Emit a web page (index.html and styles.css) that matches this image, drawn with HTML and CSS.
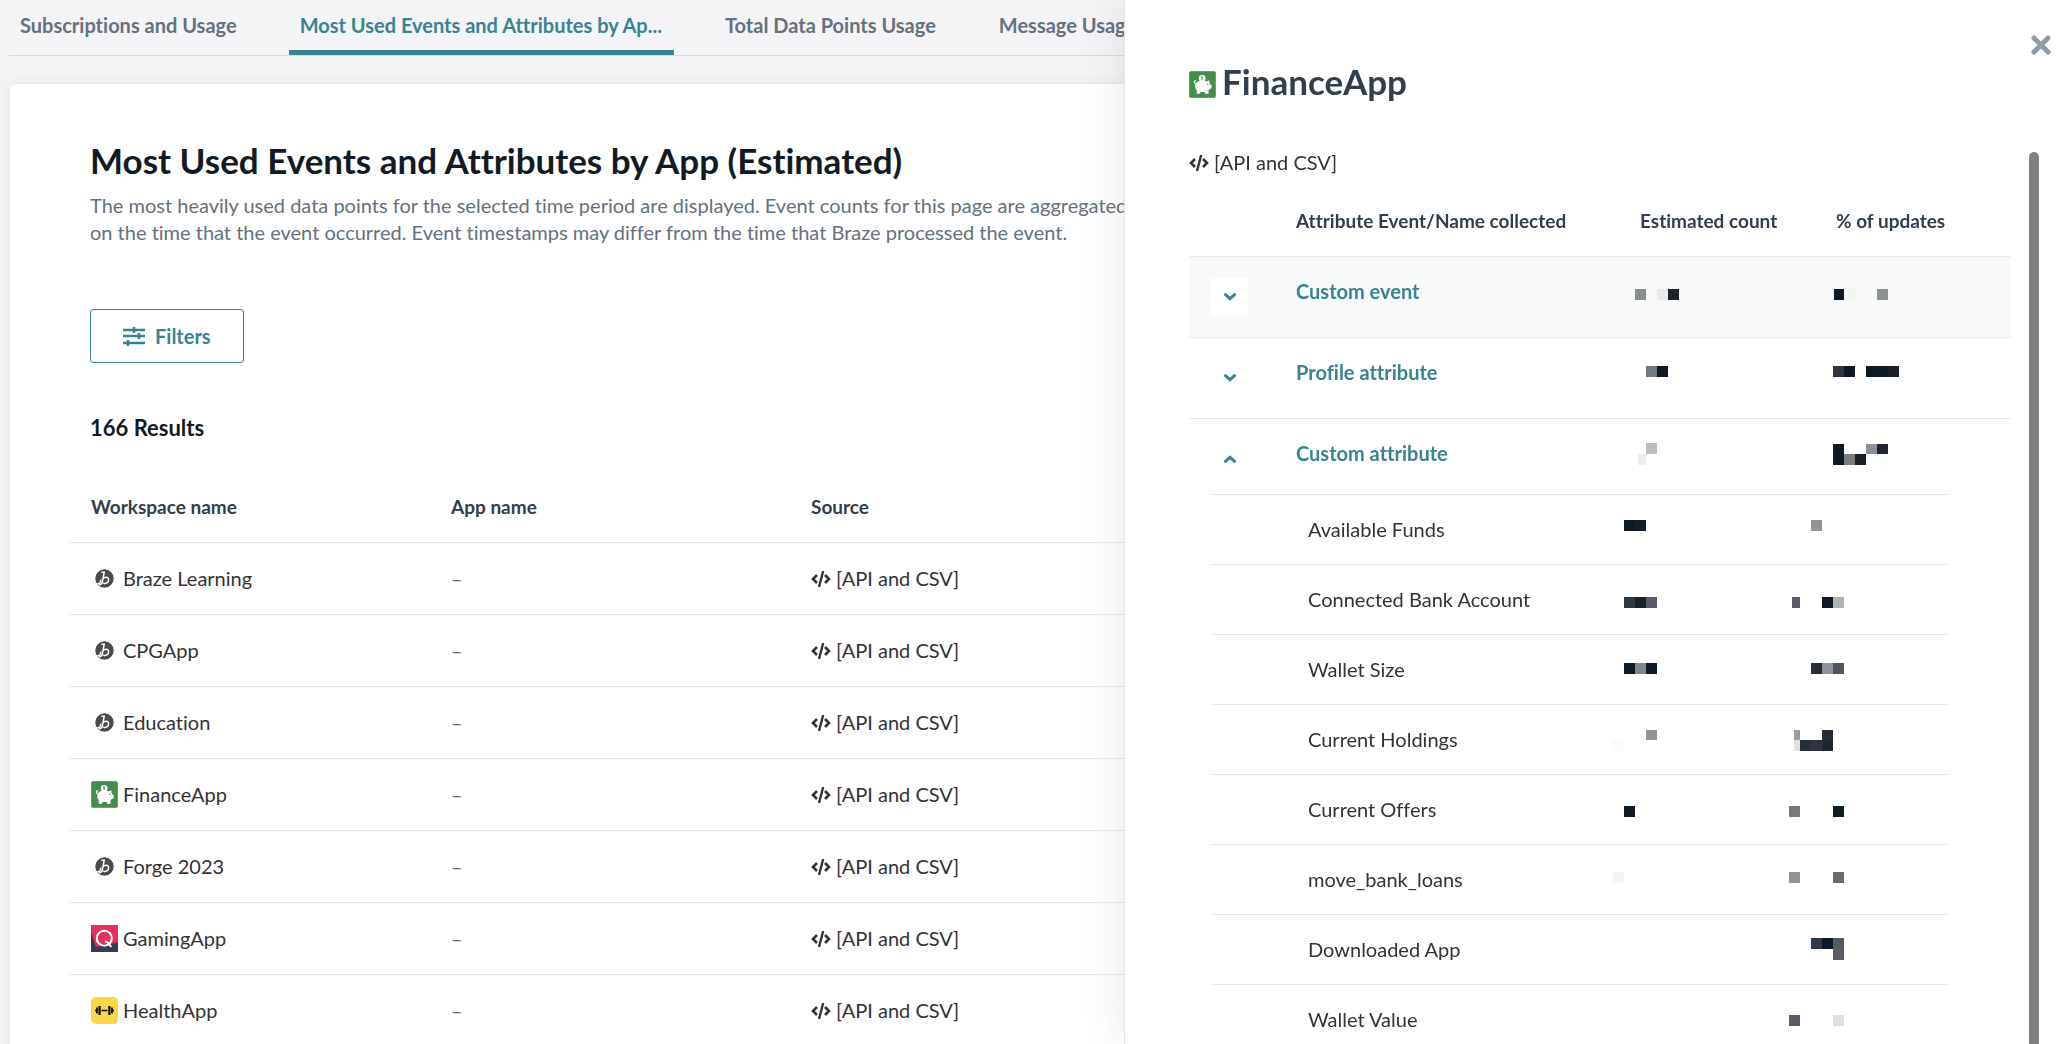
FILE: index.html
```html
<!DOCTYPE html>
<html lang="en">
<head>
<meta charset="utf-8">
<title>Most Used Events and Attributes by App</title>
<link rel="stylesheet" href="styles.css">
</head>
<body>
<svg class="sprite" aria-hidden="true">
  <symbol id="code" viewBox="0 0 20 16">
    <path d="M6 4 2 8l4 4M14 4l4 4-4 4" fill="none" stroke="currentColor" stroke-width="2.6"/>
    <path d="M12 .8 8.2 15.2" fill="none" stroke="currentColor" stroke-width="2.4" stroke-linecap="round"/>
  </symbol>
  <symbol id="braze" viewBox="0 0 27 27">
    <circle cx="13.500" cy="13.500" r="9.200" fill="#4b4b4d"/>
    <path d="M4.500 18.800c3 .8 5-1 5.400-3.800M10.800 7.200h2.400l-1.600 8.600c-.3 2-1.200 3.400-3 3.800M12 14c1.200-2.200 5.600-2.600 5.600.8 0 2.800-2.600 4.400-5 3.400" fill="none" stroke="#fff" stroke-width="1.500" stroke-linecap="round"/>
  </symbol>
  <symbol id="finance" viewBox="0 0 27 27">
    <rect x=".5" y=".5" width="26" height="26" rx="1.500" fill="#448d4c" stroke="#77a244"/>
    <circle cx="13.200" cy="7.300" r="3.400" fill="#fff"/>
    <path d="M13.200 5.200v4.200M12.200 6.200l1-.9" stroke="#448d4c" stroke-width="1" fill="none"/>
    <path d="M7.500 11.500c1.800-1.500 3.700-1.900 6-1.900 1.500 0 2.900.3 4 .9l2.800-1.300.3 3.300 1 1.300h1v3.500l-1.900.6-1.200 1.600v3.200h-3.600v-1.800h-4.700v1.800H7.700v-3.600c-1.300-1.200-1.700-2.600-1.500-4.500z" fill="#fff"/>
    <path d="M7.500 13c-2.600 0-2.800-3.600-.8-3.100" fill="none" stroke="#fff" stroke-width="1.300" stroke-linecap="round"/>
    <circle cx="18.800" cy="13.400" r=".7" fill="#448d4c"/>
  </symbol>
  <symbol id="gaming" viewBox="0 0 27 27">
    <path d="M0 0h27v27H0z" fill="#e5305b"/>
    <path d="M0 7.500 5 22l22-4.500V27H0z" fill="#353c50"/>
    <circle cx="13.300" cy="13.200" r="7.500" fill="none" stroke="#fff" stroke-width="2"/>
    <path d="m14 16.200 3.200 1.500 3 4.300" fill="none" stroke="#fff" stroke-width="2"/>
  </symbol>
  <symbol id="health" viewBox="0 0 27 27">
    <rect width="27" height="27" rx="5" fill="#f9d749"/>
    <path d="M4 13.500h2M10.500 13.500h6M21 13.500h2" stroke="#111" stroke-width="1.400"/>
    <path d="M6 10.500v6M21 10.500v6" stroke="#111" stroke-width="1.800"/>
    <path d="M8.600 9v9M18.400 9v9" stroke="#111" stroke-width="2.200"/>
  </symbol>
  <symbol id="chevron" viewBox="0 0 12 8">
    <path d="m1.500 1.700 4.500 4 4.500-4" fill="none" stroke="currentColor" stroke-width="3" stroke-linecap="round"/>
  </symbol>
</svg>

<main class="page">
  <nav class="tabs" aria-label="Usage reports">
    <a class="tab" href="#subscriptions">Subscriptions and Usage</a>
    <a class="tab tab-active" href="#events" aria-current="page">Most Used Events and Attributes by Ap...</a>
    <a class="tab" href="#data-points">Total Data Points Usage</a>
    <a class="tab" href="#messages">Message Usage</a>
  </nav>

  <section class="card">
    <h1 class="title">Most Used Events and Attributes by App (Estimated)</h1>
    <p class="description">The most heavily used data points for the selected time period are displayed. Event counts for this page are aggregated based<br>on the time that the event occurred. Event timestamps may differ from the time that Braze processed the event.</p>
    <button class="filters" type="button">
      <svg width="22" height="20" viewBox="0 0 22 20" fill="none" stroke="currentColor" stroke-width="2.600" aria-hidden="true"><path d="M0 4h22M0 10h22M0 17h22M11 1v6M16 7v6M5 14v6"/></svg>
      Filters
    </button>
    <h2 class="results">166 Results</h2>

    <table class="workspaces">
      <thead>
        <tr><th scope="col">Workspace name</th><th scope="col">App name</th><th scope="col">Source</th></tr>
      </thead>
      <tbody>
        <tr><td><span class="label"><svg class="logo"><use href="#braze"/></svg>Braze Learning</span></td><td class="none">–</td><td><span class="label"><svg class="code"><use href="#code"/></svg>[API and CSV]</span></td></tr>
        <tr><td><span class="label"><svg class="logo"><use href="#braze"/></svg>CPGApp</span></td><td class="none">–</td><td><span class="label"><svg class="code"><use href="#code"/></svg>[API and CSV]</span></td></tr>
        <tr><td><span class="label"><svg class="logo"><use href="#braze"/></svg>Education</span></td><td class="none">–</td><td><span class="label"><svg class="code"><use href="#code"/></svg>[API and CSV]</span></td></tr>
        <tr><td><span class="label"><svg class="logo"><use href="#finance"/></svg>FinanceApp</span></td><td class="none">–</td><td><span class="label"><svg class="code"><use href="#code"/></svg>[API and CSV]</span></td></tr>
        <tr><td><span class="label"><svg class="logo"><use href="#braze"/></svg>Forge 2023</span></td><td class="none">–</td><td><span class="label"><svg class="code"><use href="#code"/></svg>[API and CSV]</span></td></tr>
        <tr><td><span class="label"><svg class="logo"><use href="#gaming"/></svg>GamingApp</span></td><td class="none">–</td><td><span class="label"><svg class="code"><use href="#code"/></svg>[API and CSV]</span></td></tr>
        <tr><td><span class="label"><svg class="logo"><use href="#health"/></svg>HealthApp</span></td><td class="none">–</td><td><span class="label"><svg class="code"><use href="#code"/></svg>[API and CSV]</span></td></tr>
      </tbody>
    </table>
  </section>
</main>

<aside class="drawer" aria-labelledby="drawer-title">
  <button class="close" type="button" aria-label="Close">
    <svg width="20" height="20" viewBox="0 0 20 20" stroke="currentColor" stroke-width="5" stroke-linecap="round"><path d="m3 3 14 14M17 3 3 17"/></svg>
  </button>
  <h2 class="drawer-title" id="drawer-title"><svg class="logo"><use href="#finance"/></svg>FinanceApp</h2>
  <p class="source label"><svg class="code"><use href="#code"/></svg>[API and CSV]</p>

  <table class="usage">
    <colgroup><col class="col-toggle"><col><col class="col-count"><col class="col-percent"></colgroup>
    <thead>
      <tr><td></td><th scope="col">Attribute Event/Name collected</th><th scope="col">Estimated count</th><th scope="col">% of updates</th></tr>
    </thead>
    <tbody>
      <tr class="group group-hover">
        <td><button class="toggle" type="button" aria-expanded="false" aria-label="Expand custom event"><svg><use href="#chevron"/></svg></button></td>
        <td><a href="#custom-event">Custom event</a></td>
        <td class="masked"><svg><rect x="17" y="32" width="11" height="11" fill="#868c90"/><rect x="39" y="32" width="11" height="11" fill="#e9ebeb"/><rect x="50" y="32" width="11" height="11" fill="#1d252b"/></svg></td>
        <td class="masked"><svg><rect x="20" y="32" width="10" height="11" fill="#101a24"/><rect x="30" y="32" width="11" height="11" fill="#f3f4f4"/><rect x="63" y="32" width="11" height="11" fill="#8b9195"/></svg></td>
      </tr>
      <tr class="group">
        <td><button class="toggle" type="button" aria-expanded="false" aria-label="Expand profile attribute"><svg><use href="#chevron"/></svg></button></td>
        <td><a href="#profile-attribute">Profile attribute</a></td>
        <td class="masked"><svg><rect x="28" y="28" width="11" height="11" fill="#75797d"/><rect x="39" y="28" width="11" height="11" fill="#101a24"/></svg></td>
        <td class="masked"><svg><rect x="19" y="28" width="11" height="11" fill="#2f353d"/><rect x="30" y="28" width="11" height="11" fill="#101a24"/><rect x="52" y="28" width="22" height="11" fill="#101a24"/><rect x="74" y="28" width="11" height="11" fill="#1a2128"/></svg></td>
      </tr>
      <tr class="group group-open">
        <td><button class="toggle" type="button" aria-expanded="true" aria-label="Collapse custom attribute"><svg><use href="#chevron"/></svg></button></td>
        <td><a href="#custom-attribute">Custom attribute</a></td>
        <td class="masked"><svg><rect x="28" y="24" width="11" height="11" fill="#bbbfc2"/><rect x="20" y="35" width="8" height="11" fill="#ebeced"/></svg></td>
        <td class="masked"><svg><rect x="19" y="25" width="11" height="21" fill="#101a24"/><rect x="30" y="35" width="11" height="11" fill="#797d81"/><rect x="41" y="35" width="11" height="11" fill="#1a2229"/><rect x="52" y="25" width="11" height="10" fill="#8c8f94"/><rect x="63" y="25" width="11" height="10" fill="#1f262d"/><rect x="63" y="35" width="11" height="11" fill="#fafcfc"/></svg></td>
      </tr>
      <tr>
        <td class="nested" colspan="4">
          <table class="details">
            <colgroup><col><col class="col-sub-count"><col class="col-sub-percent"></colgroup>
            <tbody>
              <tr><td>Available Funds</td>
                <td class="masked"><svg><rect x="33" y="25" width="11" height="11" fill="#101a24"/><rect x="44" y="25" width="11" height="11" fill="#161e26"/></svg></td>
                <td class="masked"><svg><rect x="46" y="25" width="11" height="11" fill="#909397"/></svg></td></tr>
              <tr><td>Connected Bank Account</td>
                <td class="masked"><svg><rect x="33" y="32" width="11" height="11" fill="#30393f"/><rect x="44" y="32" width="11" height="11" fill="#17222a"/><rect x="55" y="32" width="11" height="11" fill="#585c65"/></svg></td>
                <td class="masked"><svg><rect x="27" y="32" width="8" height="11" fill="#585c65"/><rect x="57" y="32" width="11" height="11" fill="#101a24"/><rect x="68" y="32" width="11" height="11" fill="#b0b3b6"/></svg></td></tr>
              <tr><td>Wallet Size</td>
                <td class="masked"><svg><rect x="33" y="28" width="11" height="11" fill="#101a24"/><rect x="44" y="28" width="11" height="11" fill="#81868a"/><rect x="55" y="28" width="11" height="11" fill="#101a24"/></svg></td>
                <td class="masked"><svg><rect x="46" y="28" width="11" height="11" fill="#262d34"/><rect x="57" y="28" width="11" height="11" fill="#909397"/><rect x="68" y="28" width="11" height="11" fill="#50575e"/></svg></td></tr>
              <tr><td>Current Holdings</td>
                <td class="masked"><svg><rect x="55" y="25" width="11" height="10" fill="#909397"/><rect x="22" y="35" width="11" height="11" fill="#f9fbfb"/></svg></td>
                <td class="masked"><svg><rect x="29" y="25" width="6" height="10" fill="#9a9ca2"/><rect x="29" y="35" width="6" height="11" fill="#dedfe1"/><rect x="35" y="35" width="11" height="11" fill="#272f38"/><rect x="46" y="35" width="11" height="11" fill="#2f353d"/><rect x="57" y="25" width="11" height="10" fill="#252c33"/><rect x="57" y="35" width="11" height="11" fill="#1f262d"/></svg></td></tr>
              <tr><td>Current Offers</td>
                <td class="masked"><svg><rect x="33" y="31" width="11" height="11" fill="#101a24"/></svg></td>
                <td class="masked"><svg><rect x="24" y="31" width="11" height="11" fill="#75797d"/><rect x="68" y="31" width="11" height="11" fill="#101f24"/></svg></td></tr>
              <tr><td>move_bank_loans</td>
                <td class="masked"><svg><rect x="22" y="27" width="11" height="11" fill="#f4f5f5"/></svg></td>
                <td class="masked"><svg><rect x="24" y="27" width="11" height="11" fill="#8f9596"/><rect x="68" y="27" width="11" height="11" fill="#666b74"/></svg></td></tr>
              <tr><td>Downloaded App</td>
                <td class="masked"></td>
                <td class="masked"><svg><rect x="46" y="23" width="11" height="11" fill="#333a42"/><rect x="57" y="23" width="11" height="11" fill="#101a24"/><rect x="68" y="23" width="11" height="11" fill="#575b60"/><rect x="68" y="34" width="11" height="11" fill="#5a5e67"/></svg></td></tr>
              <tr><td>Wallet Value</td>
                <td class="masked"></td>
                <td class="masked"><svg><rect x="24" y="30" width="11" height="11" fill="#585c65"/><rect x="68" y="30" width="11" height="11" fill="#dedfe1"/></svg></td></tr>
            </tbody>
          </table>
        </td>
      </tr>
    </tbody>
  </table>
  <span class="scroll-thumb"></span>
</aside>
</body>
</html>
```
FILE: styles.css
```css
* {
  box-sizing: border-box;
}

body {
  margin: 0;
  height: 100vh;
  overflow: hidden;
  background: #f4f4f6;
  color: #333;
  font: 20px/27px Lato, "Liberation Sans", sans-serif;
  font-variant-ligatures: none;
}

h1, h2, p {
  margin: 0;
}

a {
  color: inherit;
  text-decoration: none;
}

button {
  padding: 0;
  border: 0;
  background: none;
  color: inherit;
  font: inherit;
}

svg {
  flex: none;
}

table {
  width: 100%;
  border-collapse: separate;
  border-spacing: 0;
  table-layout: fixed;
}

th, td {
  padding: 0 0 0 22px;
  text-align: left;
}

th {
  color: #323e4b;
  font-size: 19px;
  font-weight: 700;
}

.sprite {
  display: none;
}

.logo {
  width: 27px;
  height: 27px;
}

.code {
  width: 20px;
  height: 16px;
}

.label {
  display: flex;
  align-items: center;
  gap: 5px;
}

/* Page behind the drawer */

.page {
  padding-left: 9px;
}

.tabs {
  display: flex;
  gap: 40px;
  height: 56px;
  border-bottom: 1px solid #d8dadf;
  white-space: nowrap;
}

.tab {
  padding: 12px 12px 0 11px;
  color: #65717c;
  font-weight: 700;
}

.tab-active {
  border-bottom: 5px solid #398391;
  color: #398391;
}

.card {
  min-height: 100vh;
  margin: 27px 9px 0 0;
  padding: 52px 59px 0;
  border: 1px solid #e8e9ee;
  border-radius: 7px;
  background: #fff;
  box-shadow: 0 0 14px rgba(60, 70, 130, 0.06);
}

.title {
  margin-left: 21px;
  color: #121b24;
  font-size: 35px;
  line-height: 48px;
}

.description {
  margin: 8px 0 0 21px;
  color: #65717c;
}

.filters {
  display: flex;
  align-items: center;
  gap: 10px;
  height: 54px;
  margin: 63px 0 0 21px;
  padding: 0 32px;
  border: 1px solid #398391;
  border-radius: 3px;
  color: #398391;
  font-weight: 700;
}

.results {
  margin: 50px 0 0 21px;
  color: #121b24;
  font-size: 22px;
  line-height: 30px;
}

.workspaces th {
  height: 100px;
  padding-top: 28px;
  border-bottom: 1px solid #e8eaea;
}

.workspaces th:nth-child(-n+2) {
  width: 360px;
}

.workspaces td {
  height: 72px;
  border-bottom: 1px solid #e8eaea;
}

.workspaces .none {
  color: #65717c;
}

/* Drawer */

.drawer {
  position: fixed;
  inset: 0 0 0 auto;
  width: min(936px, 100%);
  padding: 57px 49px 0 64px;
  overflow: hidden;
  border-left: 1px solid #e3e6e9;
  background: #fff;
  box-shadow: 0 0 40px rgba(50, 62, 75, 0.12);
}

.close {
  position: absolute;
  top: 35px;
  right: 9px;
  height: 20px;
  line-height: 0;
  color: #929ca5;
}

.drawer-title {
  display: flex;
  align-items: center;
  gap: 6px;
  color: #323e4b;
  font-size: 35px;
  line-height: 48px;
}

.drawer-title .logo {
  margin-top: 7px;
}

.source {
  margin-top: 44px;
}

.col-toggle { width: 85px; }
.col-count { width: 196px; }
.col-percent { width: 197px; }
.col-sub-count { width: 174px; }
.col-sub-percent { width: 183px; }

.usage thead th,
.usage thead td {
  height: 81px;
  padding-top: 9px;
  border-bottom: 1px solid #e8eaea;
}

.usage .group > td {
  height: 81px;
  padding-top: 21px;
  border-bottom: 1px solid #e8eaea;
  color: #398391;
  font-weight: 700;
  vertical-align: top;
}

.usage .group-hover > td {
  background: #f8faf9;
}

.usage .group-open > td {
  height: 75px;
  border-bottom: 0;
}

.usage td.masked,
.usage .group > td.masked {
  padding: 0;
  vertical-align: top;
}

.masked svg {
  display: block;
  width: 120px;
  height: 60px;
}

.toggle {
  display: grid;
  place-items: center;
  width: 37px;
  height: 37px;
  background: #fff;
}

.toggle svg {
  width: 12px;
  height: 8px;
}

.toggle[aria-expanded="true"] svg {
  transform: rotate(180deg);
}

.usage .nested {
  padding: 0 63px 0 22px;
}

.details {
  border-top: 1px solid #e8eaea;
}

.details td {
  height: 70px;
  border-bottom: 1px solid #e8eaea;
}

.details td:first-child {
  padding-left: 97px;
}

.scroll-thumb {
  position: absolute;
  top: 152px;
  right: 21px;
  bottom: 0;
  width: 10px;
  border-radius: 5px 5px 0 0;
  background: #808080;
}
```
